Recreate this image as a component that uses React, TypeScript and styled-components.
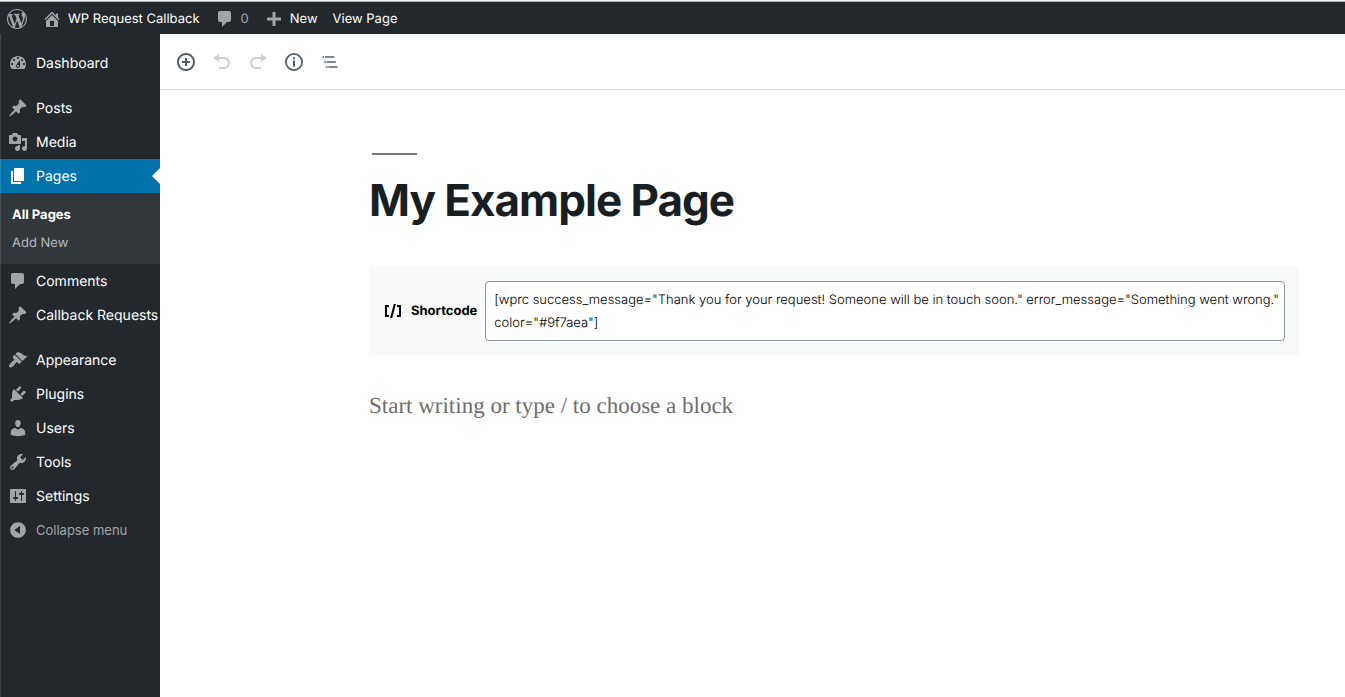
import React from "react";
import styled, { createGlobalStyle } from "styled-components";

const GlobalStyle = createGlobalStyle`
  *, *::before, *::after { box-sizing: border-box; }
  body {
    margin: 0;
    background: #fff;
    color: #191e23;
    font-family: Inter, "Liberation Sans", sans-serif;
    font-size: 13px;
    text-rendering: geometricPrecision;
  }
  #root { min-height: 100vh; display: flex; }
  a { color: inherit; text-decoration: none; }
  button { font: inherit; border: 0; background: none; padding: 0; cursor: pointer; }
  ul { list-style: none; margin: 0; padding: 0; }
`;

const paths = {
  wordpress:
    "M20 10c0-5.51-4.49-10-10-10C4.48 0 0 4.49 0 10c0 5.52 4.48 10 10 10 5.51 0 10-4.48 10-10zM7.78 15.37L4.37 6.22c.55-.02 1.17-.08 1.17-.08.5-.06.44-1.13-.06-1.11 0 0-1.45.11-2.37.11-.18 0-.37 0-.58-.01C4.12 2.69 6.87 1.11 10 1.11c2.33 0 4.45.87 6.05 2.34-.68-.11-1.65.39-1.65 1.58 0 .74.45 1.36.9 2.1.35.61.55 1.36.55 2.46 0 1.49-1.4 5-1.4 5l-3.03-8.37c.54-.02.82-.17.82-.17.5-.05.44-1.25-.06-1.22 0 0-1.44.12-2.38.12-.87 0-2.33-.12-2.33-.12-.5-.03-.56 1.2-.06 1.22l.92.08 1.26 3.41zM17.41 10c.24-.64.74-1.87.43-4.25.7 1.29 1.05 2.71 1.05 4.25 0 3.29-1.73 6.24-4.4 7.78.97-2.59 1.94-5.2 2.92-7.78zM6.1 18.09C3.12 16.65 1.11 13.53 1.11 10c0-1.3.23-2.48.72-3.59C3.25 10.3 4.67 14.2 6.1 18.09zm4.03-6.63l2.58 6.98c-.86.29-1.76.45-2.71.45-.79 0-1.57-.11-2.29-.33.81-2.38 1.62-4.74 2.42-7.1z",
  home: "M16 8.5l1.53 1.53-1.06 1.06L10 4.6l-6.47 6.49-1.06-1.06L10 2.5l4 4v-2h2v4zm-6-2.46l6 5.99V18H4v-5.97zM12 17v-5H8v5h4z",
  comments:
    "M5 2h9c1.1 0 2 .9 2 2v7c0 1.1-.9 2-2 2h-2l-5 5v-5H5c-1.1 0-2-.9-2-2V4c0-1.1.9-2 2-2z",
  plus: "M17 8.5v3h-5.5V17h-3v-5.500H3v-3h5.500V3h3v5.500z",
  dashboard:
    "M3.76 16h12.48c1.1-1.37 1.76-3.11 1.76-5 0-4.42-3.58-8-8-8s-8 3.58-8 8c0 1.89.66 3.63 1.76 5zM10 4c.55 0 1 .45 1 1s-.45 1-1 1-1-.45-1-1 .45-1 1-1zM6 6c.55 0 1 .45 1 1s-.45 1-1 1-1-.45-1-1 .45-1 1-1zm8 0c.55 0 1 .45 1 1s-.45 1-1 1-1-.45-1-1 .45-1 1-1zm-5.370 5.550L12 7v6c0 1.100-.9 2-2 2s-2-.9-2-2c0-.57.24-1.080.63-1.450zM4 10c.55 0 1 .45 1 1s-.45 1-1 1-1-.45-1-1 .45-1 1-1zm12 0c.55 0 1 .45 1 1s-.45 1-1 1-1-.45-1-1 .45-1 1-1zm-5 3c0-.55-.45-1-1-1s-1 .45-1 1 .45 1 1 1 1-.45 1-1z",
  pin: "M10.44 3.02l1.82-1.82 6.36 6.35-1.83 1.82c-1.05-.68-2.48-.57-3.41.36l-.75.75c-.92.93-1.04 2.35-.35 3.41l-1.83 1.82-2.41-2.41-2.8 2.79c-.42.42-3.38 2.71-3.8 2.29s1.86-3.39 2.28-3.81l2.79-2.79L4.1 9.36l1.83-1.82c1.05.69 2.48.57 3.4-.36l.75-.75c.93-.92 1.05-2.35.36-3.41z",
  media:
    "M13 11V4c0-.55-.45-1-1-1h-1.67L9 1H5L3.67 3H2c-.55 0-1 .45-1 1v7c0 .55.45 1 1 1h10c.55 0 1-.45 1-1zM7 4.5c1.38 0 2.5 1.12 2.5 2.5S8.38 9.5 7 9.5 4.5 8.38 4.5 7 5.62 4.5 7 4.5zM14 6h5v10.5c0 1.38-1.12 2.5-2.5 2.5S14 17.88 14 16.5s1.12-2.5 2.5-2.5c.17 0 .34.02.5.05V9h-3V6zm-4 8.05V13h2v3.5c0 1.38-1.12 2.5-2.5 2.5S7 17.88 7 16.5 8.12 14 9.5 14c.17 0 .34.02.5.05z",
  page: "M6 15V2h10v13H6zm-1 1h8v2H3V5h2v11z",
  appearance:
    "M14.48 11.06L7.41 3.99l1.5-1.5c.5-.56 2.3-.47 3.51.32 1.21.8 1.43 1.28 2.91 2.1 1.18.64 2.45 1.26 4.45.85zm-.71.71L6.7 4.7 4.93 6.47c-.39.39-.39 1.02 0 1.41l1.06 1.06c.39.39.39 1.03 0 1.42-.6.6-1.43 1.11-2.21 1.69-.35.26-.7.53-1.01.84C1.43 14.23.4 16.08 1.4 17.07c.99 1 2.84-.03 4.18-1.36.31-.31.58-.66.85-1.02.57-.78 1.08-1.61 1.69-2.21.39-.39 1.02-.39 1.41 0l1.06 1.06c.39.39 1.02.39 1.41 0z",
  plugins:
    "M13.11 4.36L9.87 7.6 8 5.73l3.24-3.24c.35-.34 1.05-.2 1.56.32.52.51.66 1.21.31 1.55zm-8 1.77l.91-1.12 9.01 9.01-1.19.84c-.71.71-2.63 1.16-3.82 1.16H6.14L4.9 17.26c-.59.59-1.54.59-2.12 0-.59-.58-.59-1.53 0-2.12l1.24-1.24v-3.88c0-1.13.4-3.19 1.09-3.89zm7.26 3.97l3.24-3.24c.34-.35 1.04-.21 1.55.31.52.51.66 1.21.31 1.55l-3.24 3.25z",
  users:
    "M10 9.25c-2.27 0-2.73-3.44-2.73-3.44C7 4.02 7.82 2 9.97 2c2.16 0 2.98 2.02 2.71 3.81 0 0-.41 3.44-2.68 3.44zm0 2.57L12.72 10c2.39 0 4.52 2.33 4.52 4.53v2.49s-3.65 1.13-7.24 1.13c-3.65 0-7.24-1.13-7.24-1.13v-2.49c0-2.25 1.94-4.48 4.47-4.48z",
  tools:
    "M16.68 9.77c-1.34 1.34-3.3 1.67-4.95.99l-5.41 6.52c-.99.99-2.59.99-3.58 0s-.99-2.59 0-3.57l6.52-5.42c-.68-1.65-.35-3.61.99-4.95 1.28-1.28 3.12-1.62 4.72-1.06l-2.89 2.89 2.82 2.82 2.86-2.87c.53 1.58.18 3.39-1.08 4.65zM3.81 16.21c.4.39 1.04.39 1.43 0 .4-.4.4-1.04 0-1.43-.39-.4-1.03-.4-1.43 0-.39.39-.39 1.03 0 1.43z",
  settings:
    "M18 16V4c0-.55-.45-1-1-1H3c-.55 0-1 .45-1 1v12c0 .55.45 1 1 1h14c.55 0 1-.45 1-1zM8 11h1c.55 0 1 .45 1 1s-.45 1-1 1H8v1.5c0 .28-.22.5-.5.5s-.5-.22-.5-.5V13H6c-.55 0-1-.45-1-1s.45-1 1-1h1V5.5c0-.28.22-.5.5-.5s.5.22.5.5V11zm5-2h-1c-.55 0-1-.45-1-1s.45-1 1-1h1V5.5c0-.28.22-.5.5-.5s.5.22.5.5V7h1c.55 0 1 .45 1 1s-.45 1-1 1h-1v5.5c0 .28-.22.5-.5.5s-.5-.22-.5-.5V9z",
  collapse:
    "M10 2.16c4.33 0 7.84 3.51 7.84 7.84s-3.51 7.84-7.84 7.84S2.160 14.330 2.160 10 5.710 2.160 10 2.160zm2 11.720V6.120L6.180 9.970z",
  insert:
    "M10 1c-5 0-9 4-9 9s4 9 9 9 9-4 9-9-4-9-9-9zm0 16c-3.900 0-7-3.100-7-7s3.100-7 7-7 7 3.100 7 7-3.100 7-7 7zm1-11H9v3H6v2h3v3h2v-3h3V9h-3V6z",
  undo: "M12 5H7V2L1 6l6 4V7h5c2.200 0 4 1.800 4 4s-1.800 4-4 4H7v2h5c3.300 0 6-2.700 6-6s-2.700-6-6-6z",
  redo: "M8 5h5V2l6 4-6 4V7H8c-2.200 0-4 1.800-4 4s1.800 4 4 4h5v2H8c-3.300 0-6-2.700-6-6s2.700-6 6-6z",
  info: "M10 1a9 9 0 1 0 0 18 9 9 0 0 0 0-18zm0 1.800a7.200 7.200 0 1 1 0 14.400 7.200 7.200 0 0 1 0-14.400zM9 5.200h2v2H9zM9 8.500h2v6.300H9z",
  outline:
    "M5 5H3v2h2V5zm3 8h11v-2H8v2zm9-8H6v2h11V5zM7 11H5v2h2v-2zm0 8h2v-2H7v2zm3-2v2h11v-2H10z",
  shortcode: "M6 14H4V6h2V4H2v12h4zM7.100 17h2.100l3.700-14h-2.100zM14 4v2h2v8h-2v2h4V4z",
};

type IconName = keyof typeof paths;

const Svg = styled.svg`
  flex: none;
  display: block;
  fill: currentColor;
`;

function Icon({ name, size = 20, box = 20 }: { name: IconName; size?: number; box?: number }) {
  return (
    <Svg width={size} height={size} viewBox={`0 0 ${box} ${box}`} fillRule="evenodd" aria-hidden="true">
      <path d={paths[name]} />
    </Svg>
  );
}

const Shell = styled.div`
  flex: 1;
  display: flex;
  flex-direction: column;
`;

const AdminBar = styled.header`
  display: flex;
  align-items: center;
  height: 34px;
  padding: 2px 7px 0;
  border-top: 1px solid #f1f4f5;
  box-shadow: inset 0 1px #aab4ba;
  background: #23282d;
  color: #eee;
`;

const BarLink = styled.a<{ $muted?: boolean }>`
  display: flex;
  align-items: center;
  gap: 6px;
  margin-right: 15px;
  color: ${(p) => (p.$muted ? "#a0a5aa" : "#fff")};
  svg { color: #a0a5aa; }
`;

const Body = styled.div`
  flex: 1;
  display: flex;
`;

const Sidebar = styled.nav`
  position: relative;
  flex: none;
  width: 160px;
  padding-top: 12px;
  background: #23282d;
  color: #eee;
  &::after {
    content: "";
    position: absolute;
    inset: 0 auto 0 0;
    width: 1px;
    background: rgba(255, 255, 255, 0.12);
  }
`;

const MenuItem = styled.li<{ $spaced?: boolean }>`
  margin-top: ${(p) => (p.$spaced ? 11 : 0)}px;
`;

const MenuLink = styled.a<{ $active?: boolean }>`
  position: relative;
  display: flex;
  align-items: center;
  gap: 8px;
  height: 34px;
  padding-left: 8px;
  font-size: 14px;
  white-space: nowrap;
  color: #fff;
  background: ${(p) => (p.$active ? "#0073aa" : "transparent")};
  svg { color: ${(p) => (p.$active ? "#fff" : "#a0a5aa")}; }
  &::after {
    content: "";
    display: ${(p) => (p.$active ? "block" : "none")};
    position: absolute;
    right: 0;
    top: 9px;
    border: 8px solid transparent;
    border-left-width: 0;
    border-right-color: #fff;
  }
`;

const SubMenu = styled.ul`
  padding: 8px 0 7px 12px;
  background: #32373c;
`;

const SubLink = styled.a<{ $current?: boolean }>`
  display: block;
  line-height: 28px;
  font-size: 13px;
  font-weight: ${(p) => (p.$current ? 700 : 400)};
  color: ${(p) => (p.$current ? "#fff" : "#b4b9be")};
`;

const CollapseButton = styled.button`
  display: flex;
  align-items: center;
  gap: 8px;
  height: 34px;
  padding-left: 8px;
  color: #a0a5aa;
  font-size: 13px;
  font-weight: 400;
`;

const Editor = styled.main`
  flex: 1;
  min-width: 0;
`;

const Toolbar = styled.div`
  display: flex;
  align-items: center;
  gap: 16px;
  height: 56px;
  padding: 0 16px;
  border-bottom: 1px solid #e2e4e7;
`;

const ToolButton = styled.button`
  color: #555d66;
  &:disabled { color: #ccd0d4; cursor: default; }
`;

const Canvas = styled.div`
  padding: 63px 46px 40px 209px;
`;

const TitleRule = styled.hr`
  width: 45px;
  height: 2px;
  margin: 0 3px;
  border: 0;
  background: #767676;
`;

const Title = styled.h1`
  margin: 17px 0 39px;
  font-size: 44px;
  line-height: 56px;
  font-weight: 700;
  letter-spacing: -1px;
`;

const ShortcodeBlock = styled.div`
  display: flex;
  align-items: center;
  gap: 8px;
  padding: 14px;
  background: #f8f9f9;
`;

const ShortcodeLabel = styled.label`
  display: flex;
  align-items: center;
  gap: 8px;
  color: #000;
  font-weight: 700;
  line-height: 18px;
`;

const ShortcodeInput = styled.textarea`
  flex: 1;
  min-width: 0;
  height: 60px;
  padding: 7px 0 5px 8px;
  border: 1px solid #8d96a0;
  border-radius: 4px;
  color: #000;
  background: #fff;
  font-family: inherit;
  font-size: 13px;
  font-weight: 300;
  line-height: 23px;
  text-rendering: inherit;
  resize: none;
  overflow: hidden;
`;

const Prompt = styled.p`
  margin: 35px 0 0;
  color: #6d6d6d;
  font-family: "Liberation Serif", serif;
  font-size: 23px;
  line-height: 32px;
`;

type Entry = { icon: IconName; label: string; spaced?: boolean; active?: boolean };

const menu: Entry[] = [
  { icon: "dashboard", label: "Dashboard" },
  { icon: "pin", label: "Posts", spaced: true },
  { icon: "media", label: "Media" },
  { icon: "page", label: "Pages", active: true },
  { icon: "comments", label: "Comments" },
  { icon: "pin", label: "Callback Requests" },
  { icon: "appearance", label: "Appearance", spaced: true },
  { icon: "plugins", label: "Plugins" },
  { icon: "users", label: "Users" },
  { icon: "tools", label: "Tools" },
  { icon: "settings", label: "Settings" },
];

const shortcode =
  '[wprc success_message="Thank you for your request! Someone will be in touch soon." error_message="Something went wrong." color="#9f7aea"]';

export default function App() {
  return (
    <>
      <GlobalStyle />
      <Shell>
        <AdminBar>
          <BarLink href="#" aria-label="About WordPress"><Icon name="wordpress" /></BarLink>
          <BarLink href="#"><Icon name="home" />WP Request Callback</BarLink>
          <BarLink href="#" $muted><Icon name="comments" />0</BarLink>
          <BarLink href="#"><Icon name="plus" />New</BarLink>
          <BarLink href="#">View Page</BarLink>
        </AdminBar>
        <Body>
          <Sidebar aria-label="Main menu">
            <ul>
              {menu.map((m) => (
                <MenuItem key={m.label} $spaced={m.spaced}>
                  <MenuLink href="#" $active={m.active}>
                    <Icon name={m.icon} />
                    {m.label}
                  </MenuLink>
                  {m.active && (
                    <SubMenu>
                      <li><SubLink href="#" $current>All Pages</SubLink></li>
                      <li><SubLink href="#">Add New</SubLink></li>
                    </SubMenu>
                  )}
                </MenuItem>
              ))}
            </ul>
            <CollapseButton type="button"><Icon name="collapse" />Collapse menu</CollapseButton>
          </Sidebar>
          <Editor>
            <Toolbar>
              <ToolButton type="button" aria-label="Add block"><Icon name="insert" /></ToolButton>
              <ToolButton type="button" aria-label="Undo" disabled><Icon name="undo" /></ToolButton>
              <ToolButton type="button" aria-label="Redo" disabled><Icon name="redo" /></ToolButton>
              <ToolButton type="button" aria-label="Content structure"><Icon name="info" /></ToolButton>
              <ToolButton type="button" aria-label="Block navigation"><Icon name="outline" box={24} /></ToolButton>
            </Toolbar>
            <Canvas>
              <TitleRule />
              <Title>My Example Page</Title>
              <ShortcodeBlock>
                <ShortcodeLabel htmlFor="shortcode"><Icon name="shortcode" />Shortcode</ShortcodeLabel>
                <ShortcodeInput id="shortcode" defaultValue={shortcode} spellCheck={false} />
              </ShortcodeBlock>
              <Prompt>Start writing or type / to choose a block</Prompt>
            </Canvas>
          </Editor>
        </Body>
      </Shell>
    </>
  );
}
